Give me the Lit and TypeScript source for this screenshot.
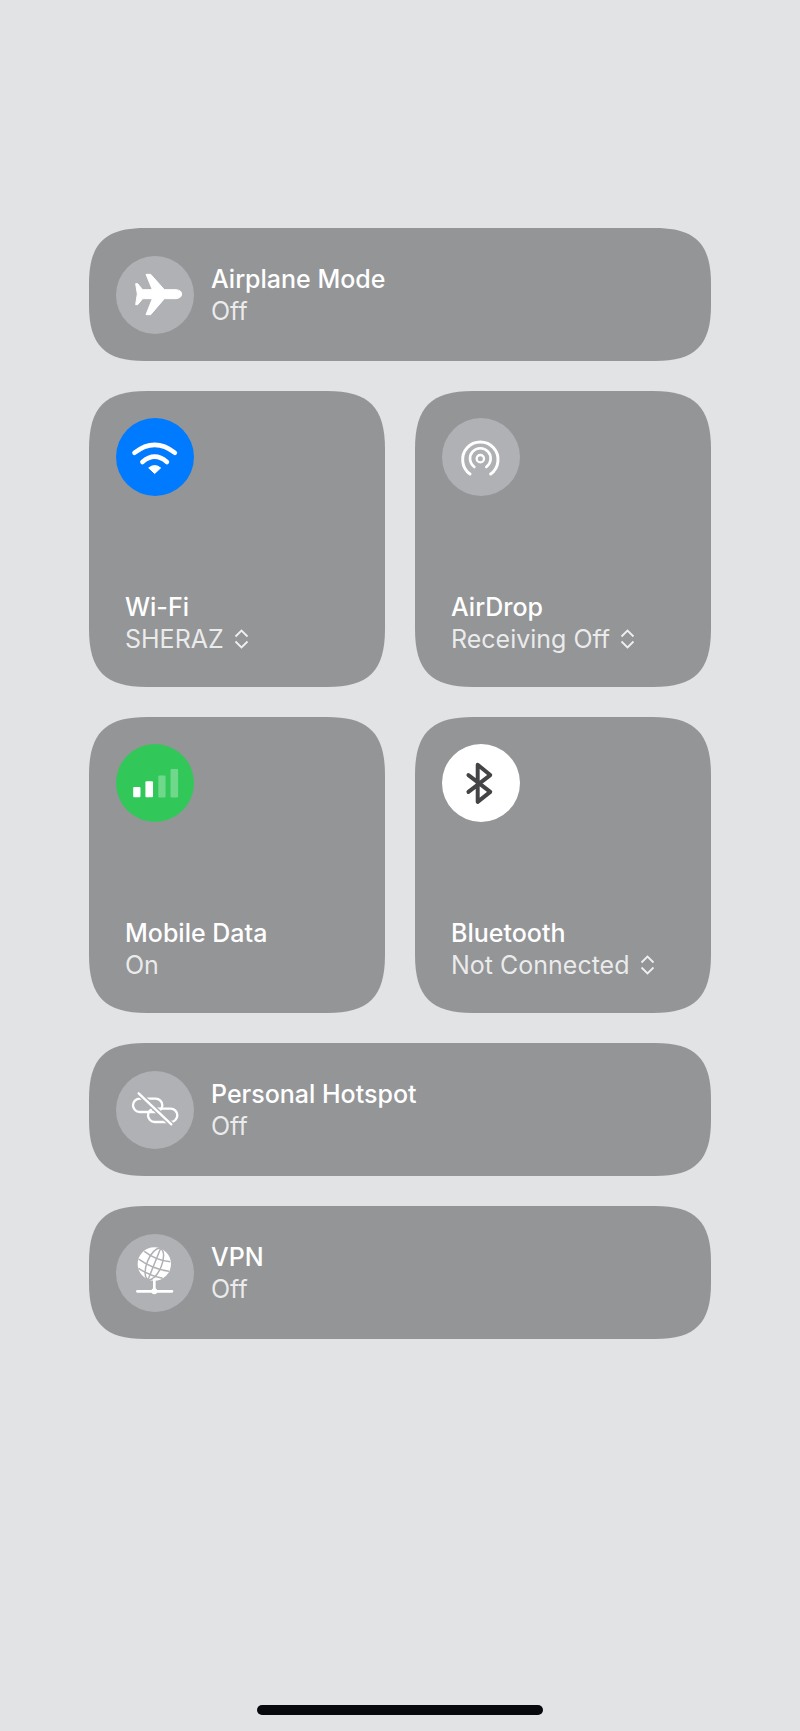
import { LitElement, css, html, svg, unsafeCSS } from "lit";
import { customElement } from "lit/decorators.js";

// continuous (squircle) corners, plain border-radius looks too round here
function squircle(w: number, h: number, e: number) {
  const c = e * 0.28;
  return unsafeCSS(
    `path("M${e} 0H${w - e}C${w - c} 0 ${w} ${c} ${w} ${e}V${h - e}C${w} ${h - c} ${w - c} ${h} ${w - e} ${h}H${e}C${c} ${h} 0 ${h - c} 0 ${h - e}V${e}C0 ${c} ${c} 0 ${e} 0Z")`
  );
}

const CIRCLE = "#b0b1b5";

const airplane = svg`<path fill="#fff" stroke="#fff" stroke-width="3" stroke-linejoin="round"
  d="M79 101H85L100 119H129L110 73H124L165 119H200Q217 121 217 132Q217 144 200 146H165L124 194H110L129 146H100L85 164H79L84 132Z"/>`;

const wifi = svg`<g fill="none" stroke="#fff" stroke-width="14" stroke-linecap="round">
  <path d="M164 203Q225 155 286 203"/>
  <path d="M188 231Q225 199 262 231"/>
</g><path fill="#fff" stroke="#fff" stroke-width="3" stroke-linejoin="round" d="M225 266L207 249Q225 235 243 249Z"/>`;

const airdrop = svg`<g fill="none" stroke="#fff" stroke-linecap="round">
  <path stroke-width="9" d="M104 186A53 53 0 1 1 166 186"/>
  <path stroke-width="8" d="M117 165A31 31 0 1 1 153 165"/>
  <circle stroke-width="7" cx="135" cy="140" r="11"/>
</g>`;

const signal = svg`<g fill="#fff">
  <rect x="160" y="232" width="22" height="31" rx="3"/>
  <rect x="197" y="215" width="23" height="48" rx="3"/>
  <rect x="236" y="197" width="22" height="67" rx="3" opacity=".3"/>
  <rect x="273" y="178" width="23" height="86" rx="3" opacity=".3"/>
</g>`;

const bluetooth = svg`<path fill="none" stroke="#444446" stroke-width="12" stroke-linecap="round" stroke-linejoin="round"
  d="M177 196L243 247L205 277V165L243 196L177 247"/>`;

const hotspot = svg`<g fill="none" stroke="#fff" stroke-width="7">
  <rect x="71" y="101" width="88" height="40" rx="20"/>
  <rect x="116" y="131" width="88" height="40" rx="20"/>
</g>
<path stroke="${CIRCLE}" stroke-width="16" d="M88 85L186 178"/>
<path stroke="#fff" stroke-width="7" stroke-linecap="round" d="M88 85L186 178"/>`;

const vpn = svg`<circle cx="135" cy="108" r="50" fill="#fff"/>
<g fill="none" stroke="${CIRCLE}" stroke-width="4.5" transform="rotate(22 135 108)">
  <ellipse cx="135" cy="108" rx="22" ry="50"/>
  <path d="M135 58V158"/>
  <path d="M93 84Q135 96 177 84"/>
  <path d="M86 112Q135 124 184 112"/>
  <path d="M96 138Q135 146 174 138"/>
</g>
<path stroke="#fff" stroke-width="8" stroke-linecap="round" d="M135 155V190M84 190H188"/>
<circle cx="135" cy="190" r="9" fill="#fff"/>`;

const chevrons = html`<svg class="chevrons" viewBox="0 0 15 20">
  <path d="M1.5 7.5L7.5 1.5L13.5 7.5M1.5 12.5L7.5 18.5L13.5 12.5"/>
</svg>`;

interface Tile {
  icon: ReturnType<typeof svg>;
  box: string; // viewBox, in the coordinates the glyph was traced in
  kind: string;
  title: string;
  sub: string;
  menu?: boolean;
}

const WIFI: Tile = { icon: wifi, box: "108 98 236 236", kind: "blue", title: "Wi-Fi", sub: "SHERAZ", menu: true };
const AIRDROP: Tile = { icon: airdrop, box: "20 18 234 234", kind: "off", title: "AirDrop", sub: "Receiving Off", menu: true };
const MOBILE: Tile = { icon: signal, box: "108 102 236 236", kind: "green", title: "Mobile Data", sub: "On" };
const BLUETOOTH: Tile = { icon: bluetooth, box: "97 102 236 236", kind: "white", title: "Bluetooth", sub: "Not Connected", menu: true };

@customElement("app-root")
export class AppRoot extends LitElement {
  private _circle(t: { icon: ReturnType<typeof svg>; box: string; kind: string }) {
    return html`<div class="circle ${t.kind}">
      <svg viewBox=${t.box}>${t.icon}</svg>
    </div>`;
  }

  private _label(title: string, sub: string, menu = false) {
    return html`<div class="label">
      <div class="title">${title}</div>
      <div class="sub">${sub}${menu ? chevrons : ""}</div>
    </div>`;
  }

  private _wide(icon: ReturnType<typeof svg>, title: string) {
    return html`<div class="card wide">
      ${this._circle({ icon, box: "20 18 234 234", kind: "off" })}
      ${this._label(title, "Off")}
    </div>`;
  }

  private _tile(t: Tile) {
    return html`<div class="card tile">
      ${this._circle(t)} ${this._label(t.title, t.sub, t.menu)}
    </div>`;
  }

  render() {
    return html`
      <main>
        ${this._wide(airplane, "Airplane Mode")}
        <div class="grid">
          ${this._tile(WIFI)} ${this._tile(AIRDROP)} ${this._tile(MOBILE)}
          ${this._tile(BLUETOOTH)}
        </div>
        ${this._wide(hotspot, "Personal Hotspot")} ${this._wide(vpn, "VPN")}
      </main>
      <div class="home"></div>
    `;
  }

  static styles = css`
    :host {
      display: flex;
      flex-direction: column;
      height: 1731px;
      background: #e2e3e5;
      font-family: Inter, "Liberation Sans", sans-serif;
      color: #fff;
    }
    main {
      display: flex;
      flex-direction: column;
      gap: 30px;
      padding: 228px 89px 0;
    }
    .grid {
      display: grid;
      grid-template-columns: 296px 296px;
      gap: 30px;
    }
    .card {
      background: #949597;
      box-sizing: border-box;
      display: flex;
    }
    .wide {
      height: 133px;
      align-items: center;
      gap: 17px;
      padding: 0 27px;
      clip-path: ${squircle(622, 133, 56)};
    }
    .tile {
      height: 296px;
      flex-direction: column;
      justify-content: space-between;
      padding: 27px 27px 32px;
      clip-path: ${squircle(296, 296, 58)};
    }
    .tile .label {
      padding-left: 9px;
    }
    .circle {
      width: 78px;
      height: 78px;
      border-radius: 50%;
      flex: none;
    }
    .circle svg {
      display: block;
      width: 78px;
      height: 78px;
    }
    .off {
      background: #b0b1b5;
    }
    .blue {
      background: #007aff;
    }
    .green {
      background: #31c859;
    }
    .white {
      background: #fff;
    }
    .title {
      font-size: 25px;
      font-weight: 500;
      line-height: 32px;
    }
    .sub {
      display: flex;
      align-items: center;
      gap: 10px;
      font-size: 25px;
      line-height: 32px;
      color: rgba(255, 255, 255, 0.82);
    }
    .chevrons {
      width: 15px;
      height: 20px;
      fill: none;
      stroke: rgba(255, 255, 255, 0.85);
      stroke-width: 1.8;
    }
    .home {
      width: 286px;
      height: 10px;
      margin: auto auto 16px;
      border-radius: 5px;
      background: #08090c;
    }
  `;
}
